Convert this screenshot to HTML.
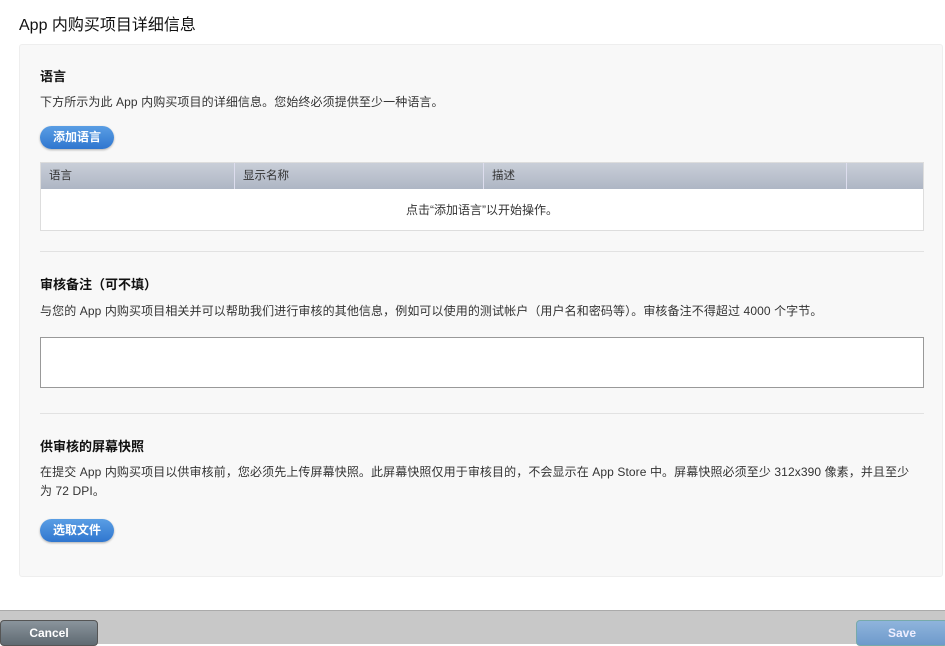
<!DOCTYPE html>
<html><head><meta charset="utf-8"><style>
*{margin:0;padding:0;box-sizing:border-box}
body{width:945px;height:644px;background:#fff;font-family:"Liberation Sans","Noto Sans CJK SC",sans-serif;color:#222;position:relative;overflow:hidden}
.title{position:absolute;left:19px;top:11px;font-size:16px;color:#111}
.panel{position:absolute;left:19px;top:44px;width:924px;height:533px;background:#f8f8f8;border:1px solid #eee;border-radius:3px}
.h{position:absolute;left:20px;font-size:13px;font-weight:bold;color:#111}
.p{position:absolute;left:20px;font-size:12px;letter-spacing:0.1px;color:#333;line-height:19px;width:870px}
.btn{position:absolute;left:20px;height:23px;border-radius:12px;background:linear-gradient(#5a9ee4,#2f76cf);color:#fff;font-size:12px;font-weight:bold;padding:0 13px;line-height:23px;box-shadow:0 1px 2px rgba(0,0,0,.3)}
.tbl{position:absolute;left:20px;top:117px;width:884px;height:69px;border:1px solid #ddd;background:#fff}
.th{height:26px;background:linear-gradient(#c9ced8,#aeb6c4);display:flex;font-size:11.5px;color:#333}
.th div{line-height:26px;padding-left:8px;border-right:1px solid #dde}
.sep{position:absolute;left:20px;width:884px;border-top:1px solid #e2e2e2}
.ta{position:absolute;left:20px;top:292px;width:884px;height:51px;border:1px solid #999;background:#fff}
.bar{position:absolute;left:0;top:610px;width:945px;height:34px;background:#c8c8c8;border-top:1px solid #aaa}
.cancel{position:absolute;left:0;top:620px;width:98px;height:26px;border-radius:4px;background:linear-gradient(#8a949c,#5f6a72);color:#fff;font-size:12px;font-weight:bold;text-align:center;line-height:24px;border:1px solid #555}
.save{position:absolute;left:856px;top:620px;width:92px;height:26px;border-radius:4px;background:linear-gradient(#8fb4dc,#6e9acb);color:#eef;font-size:12px;font-weight:bold;text-align:center;line-height:24px;border:1px solid #7aa}
</style></head><body>
<div class="title">App 内购买项目详细信息</div>
<div class="panel">
<div class="h" style="top:21px">语言</div>
<div class="p" style="top:48px">下方所示为此 App 内购买项目的详细信息。您始终必须提供至少一种语言。</div>
<div class="btn" style="top:81px">添加语言</div>
<div class="tbl"><div class="th"><div style="width:194px">语言</div><div style="width:249px">显示名称</div><div style="width:363px">描述</div><div style="flex:1;border:none"></div></div>
<div style="text-align:center;font-size:12px;line-height:42px;color:#333">点击“添加语言”以开始操作。</div></div>
<div class="sep" style="top:206px"></div>
<div class="h" style="top:229px">审核备注（可不填）</div>
<div class="p" style="top:257px">与您的 App 内购买项目相关并可以帮助我们进行审核的其他信息，例如可以使用的测试帐户（用户名和密码等）。审核备注不得超过 4000 个字节。</div>
<div class="ta"></div>
<div class="sep" style="top:368px"></div>
<div class="h" style="top:391px">供审核的屏幕快照</div>
<div class="p" style="top:418px">在提交 App 内购买项目以供审核前，您必须先上传屏幕快照。此屏幕快照仅用于审核目的，不会显示在 App Store 中。屏幕快照必须至少 312x390 像素，并且至少<br>为 72 DPI。</div>
<div class="btn" style="top:474px">选取文件</div>
</div>
<div class="bar"></div>
<div class="cancel">Cancel</div>
<div class="save">Save</div>
</body></html>
